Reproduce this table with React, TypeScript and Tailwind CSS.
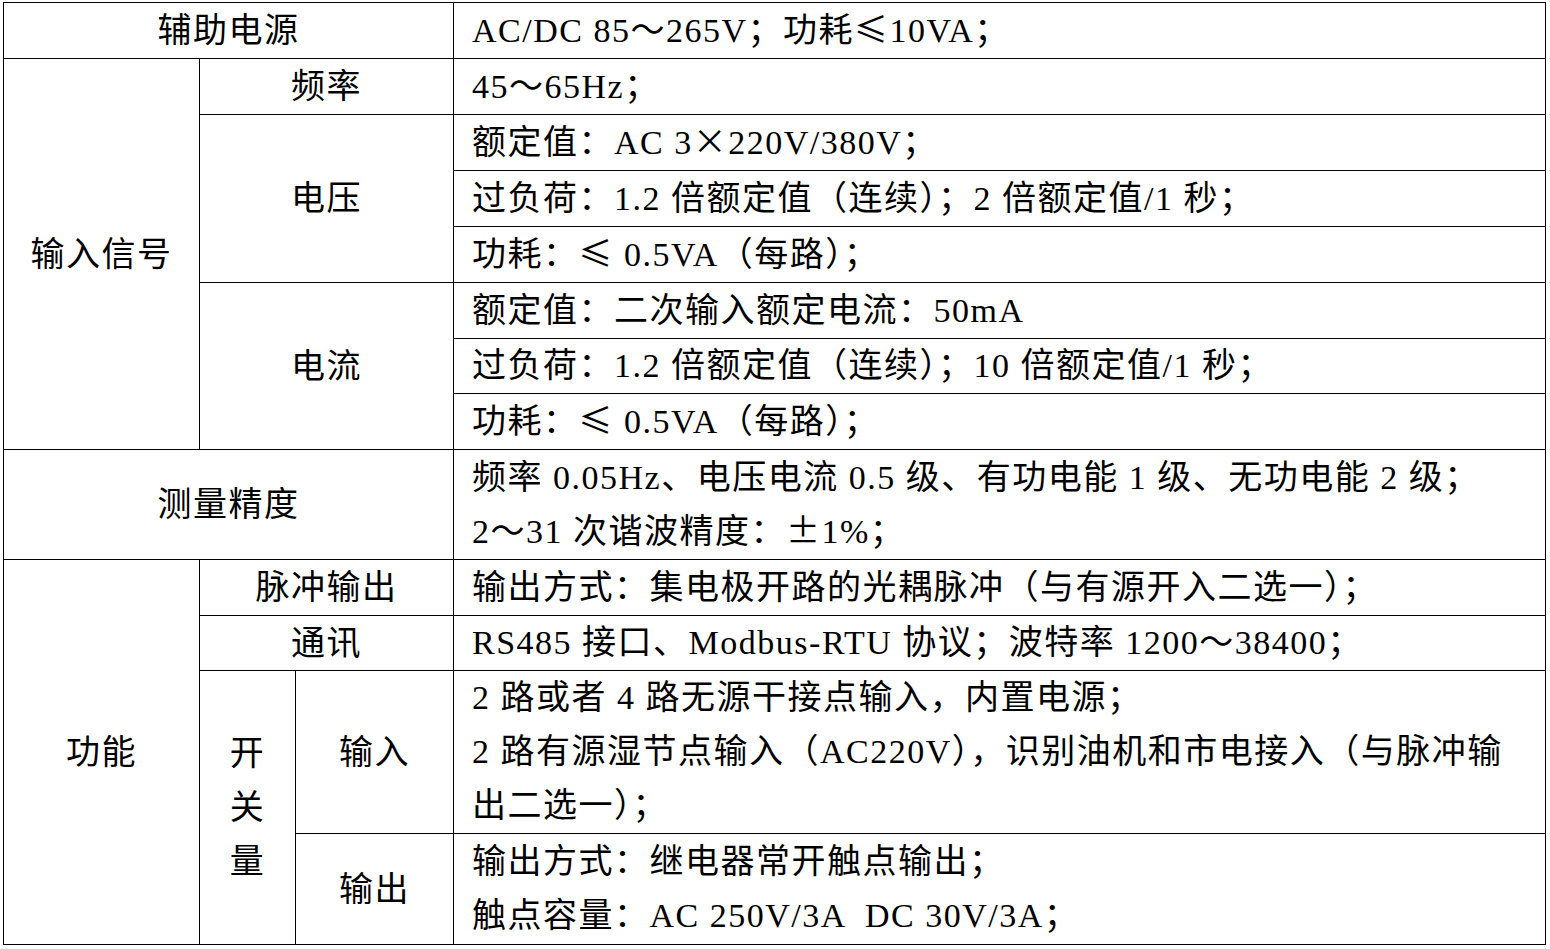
const font = { fontFamily: '"Liberation Serif", "Noto Sans CJK SC", serif' };

const cell = "border border-black align-middle p-0";
const head = `${cell} text-center`;
const body = `${cell} pl-[18px] whitespace-pre leading-[54px]`;

// full-width symbols, drawn from the CJK face like the original document
function W({ children }: { children: string }) {
  return (
    <span className="leading-none" style={{ fontFamily: '"Noto Sans CJK SC", sans-serif' }}>
      {children}
    </span>
  );
}

export default function App() {
  return (
    <div className="min-h-screen bg-white pt-[2px] pl-[3px] text-black" style={font}>
      <table className="table-fixed border-collapse w-[1543px] text-[34px] tracking-[1.5px]">
        <colgroup>
          <col className="w-[196px]" />
          <col className="w-[96px]" />
          <col className="w-[158px]" />
          <col />
        </colgroup>
        <tbody>
          <tr className="h-[56px]">
            <td colSpan={3} className={head}>辅助电源</td>
            <td className={body}>
              AC/DC 85～265V；功耗<W>≤</W>10VA；
            </td>
          </tr>
          <tr className="h-[56px]">
            <td rowSpan={7} className={head}>输入信号</td>
            <td colSpan={2} className={head}>频率</td>
            <td className={body}>45～65Hz；</td>
          </tr>
          <tr className="h-[56px]">
            <td colSpan={2} rowSpan={3} className={head}>电压</td>
            <td className={body}>
              额定值：AC 3<W>×</W>220V/380V；
            </td>
          </tr>
          <tr className="h-[56px]">
            <td className={body}>过负荷：1.2 倍额定值（连续）；2 倍额定值/1 秒；</td>
          </tr>
          <tr className="h-[56px]">
            <td className={body}>
              功耗：<W>≤</W> 0.5VA（每路）；
            </td>
          </tr>
          <tr className="h-[56px]">
            <td colSpan={2} rowSpan={3} className={head}>电流</td>
            <td className={body}>额定值：二次输入额定电流：50mA</td>
          </tr>
          <tr className="h-[55px]">
            <td className={body}>过负荷：1.2 倍额定值（连续）；10 倍额定值/1 秒；</td>
          </tr>
          <tr className="h-[56px]">
            <td className={body}>
              功耗：<W>≤</W> 0.5VA（每路）；
            </td>
          </tr>
          <tr className="h-[110px]">
            <td colSpan={3} className={head}>测量精度</td>
            <td className={body}>
              频率 0.05Hz、电压电流 0.5 级、有功电能 1 级、无功电能 2 级；
              <br />
              2～31 次谐波精度：<W>±</W>1%；
            </td>
          </tr>
          <tr className="h-[56px]">
            <td rowSpan={4} className={head}>功能</td>
            <td colSpan={2} className={head}>脉冲输出</td>
            <td className={body}>输出方式：集电极开路的光耦脉冲（与有源开入二选一）；</td>
          </tr>
          <tr className="h-[55px]">
            <td colSpan={2} className={head}>通讯</td>
            <td className={body}>RS485 接口、Modbus-RTU 协议；波特率 1200～38400；</td>
          </tr>
          <tr className="h-[163px]">
            <td rowSpan={2} className={`${head} leading-[54px]`}>
              开<br />关<br />量
            </td>
            <td className={head}>输入</td>
            <td className={body}>
              2 路或者 4 路无源干接点输入，内置电源；
              <br />
              2 路有源湿节点输入（AC220V），识别油机和市电接入（与脉冲输
              <br />
              出二选一）；
            </td>
          </tr>
          <tr className="h-[111px]">
            <td className={head}>输出</td>
            <td className={body}>
              输出方式：继电器常开触点输出；
              <br />
              触点容量：AC 250V/3A  DC 30V/3A；
            </td>
          </tr>
        </tbody>
      </table>
    </div>
  );
}
